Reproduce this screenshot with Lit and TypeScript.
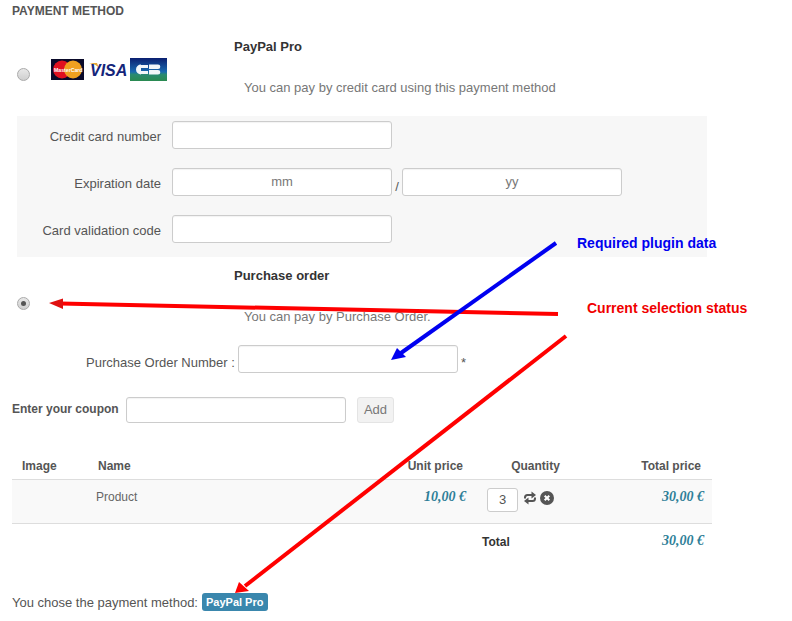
import { LitElement, html, css } from "lit";
import { customElement } from "lit/decorators.js";

@customElement("app-root")
export class AppRoot extends LitElement {
  static styles = css`
    :host { display: block; position: relative; width: 792px; height: 621px; overflow: hidden; background: #fff;
      font-family: "Liberation Sans", Arial, sans-serif; font-size: 13px; color: #555; }
    .page { display: flex; flex-direction: column; padding-left: 12px; }
    h1 { margin: 0; height: 22px; font-size: 12px; line-height: 22px; font-weight: bold; color: #555; }
    .method { display: grid; grid-template-columns: 5px 13px 21px 183px 1fr; height: 94px; }
    .method.po { height: 88px; }
    .radio { grid-column: 2; width: 13px; height: 13px; box-sizing: border-box; border-radius: 50%; border: 1px solid #aaa;
      background: linear-gradient(#e8e8e8, #cfcfcf); align-self: start; margin-top: 46px; display: flex; align-items: center; justify-content: center; }
    .radio.on { margin-top: 40px; }
    .radio i { width: 5px; height: 5px; border-radius: 50%; background: #555; }
    .cards { grid-column: 4; display: flex; align-items: flex-start; gap: 5px; padding-top: 36px; }
    .cards svg { display: block; overflow: visible; }
    .mc { margin-top: 1px; }
    .cb { margin-left: -4px; }
    .txt { grid-column: 5; display: flex; flex-direction: column; }
    .title { font-weight: bold; color: #333; line-height: 16px; margin-top: 17px; }
    .title.po { margin-top: 11px; }
    .desc { color: #777; line-height: 16px; margin-left: 10px; margin-top: 25px; white-space: nowrap; }
    .panel { margin-left: 5px; width: 690px; height: 141px; background: #f7f7f7; padding-top: 5px; box-sizing: border-box; display: flex; flex-direction: column; gap: 19px; }
    .row { display: flex; align-items: flex-start; height: 28px; }
    .row label { width: 144px; text-align: right; line-height: 16px; padding-top: 8px; color: #555; flex: none; margin-right: 11px; }
    .in { box-sizing: border-box; width: 220px; height: 28px; border: 1px solid #ccc; border-radius: 3px; background: #fff; color: #777;
      text-align: center; line-height: 26px; box-shadow: inset 0 1px 1px rgba(0,0,0,.05); flex: none; font-size: 13px; }
    .slash { width: 10px; text-align: center; padding-top: 11px; line-height: 16px; font-size: 13px; }
    .ponum { display: flex; align-items: flex-start; height: 28px; padding-left: 74px; }
    .ponum span { line-height: 16px; padding-top: 10px; width: 152px; white-space: nowrap; color: #555; }
    .star { margin-left: 3px; line-height: 16px; padding-top: 10px; font-size: 13px; color: #555; }
    .coupon { display: flex; align-items: flex-start; margin-top: 24px; height: 54px; }
    .coupon b { font-size: 12px; line-height: 16px; width: 114px; padding-top: 4px; flex: none; }
    .coupon .in { height: 26px; }
    .add { box-sizing: border-box; margin-left: 11px; width: 37px; height: 26px; border: 1px solid #e4e4e4; border-radius: 3px;
      background: #f2f2f2; color: #777; text-align: center; line-height: 24px; }
    table { border-collapse: collapse; width: 700px; table-layout: fixed; font-size: 12px; }
    .c1 { width: 76px; } .c2 { width: 270px; } .c3 { width: 116px; } .c4 { width: 114px; } .c5 { width: 124px; }
    th { height: 28px; padding: 2px 10px 0; font-weight: bold; color: #555; border-bottom: 1px solid #ddd; text-align: left; line-height: 24px; box-sizing: border-box; }
    th.unit { text-align: right; padding-right: 11px; }
    th.q { text-align: center; padding-left: 9px; padding-right: 0; }
    th.tp { text-align: right; padding-right: 11px; }
    .body td { height: 44px; background: #f9f9f9; border-bottom: 1px solid #ddd; vertical-align: top; padding: 9px 8px 0; box-sizing: border-box; }
    .foot td { height: 34px; vertical-align: top; padding: 9px 8px 0; box-sizing: border-box; }
    .body td.product { color: #666; line-height: 16px; }
    .body td.price, .foot td.price { font-family: "Liberation Serif", serif; font-style: italic; font-weight: bold; font-size: 14px; color: #2f7f98; line-height: 16px; text-align: right; padding-right: 8px; }
    .body td.qcell { padding: 8px 0 0 13px; }
    .qty { display: flex; align-items: flex-start; gap: 5px; }
    .qbox { box-sizing: border-box; width: 31px; height: 24px; border: 1px solid #ccc; border-radius: 3px; background: #fff; color: #555; text-align: center; line-height: 22px; font-size: 13px; }
    .qty svg { display: block; }
    .qty .ic { display: flex; gap: 3px; padding-top: 3px; }
    .foot td.total { font-weight: bold; color: #333; line-height: 16px; padding-top: 10px; }
    .chose { margin-top: 36px; display: flex; align-items: center; height: 20px; line-height: 20px; white-space: pre; }
    .badge { display: inline-block; margin: -2px 0 0 4px; background: #3a87ad; color: #fff; font-weight: bold; font-size: 11px; border-radius: 3px; padding: 0 5px 0 4px; height: 18px; line-height: 18px; }
    .overlay { position: absolute; left: 0; top: 0; pointer-events: none; }
    .note { position: absolute; font-size: 14px; font-weight: bold; line-height: 16px; white-space: nowrap; }
    .blue { left: 577px; top: 235px; color: #0000f0; }
    .red { left: 587px; top: 300px; color: #f00000; }
  `;

  private cards() {
    return html`
      <svg class="mc" width="33" height="21" viewBox="0 0 33 21">
        <rect width="33" height="21" fill="#0a0a2a"/>
        <circle cx="11" cy="10.5" r="9" fill="#e01020"/>
        <circle cx="22" cy="10.5" r="9" fill="#f0a020"/>
        <text x="3" y="12.500" font-size="5.200" font-weight="bold" font-family="Liberation Sans" fill="#fff">MasterCard</text>
      </svg>
      <svg width="40" height="22" viewBox="0 0 40 22">
        <path d="M0 5h8l2 5q-3-4-10-5z" fill="#e8a83a"/>
        <text x="1" y="18" font-size="16" font-weight="bold" font-style="italic" font-family="Liberation Sans" fill="#14257a">VISA</text>
      </svg>
      <svg class="cb" width="37" height="23" viewBox="0 0 37 23">
        <defs><linearGradient id="cb" x1="0" y1="0" x2="0" y2="1">
          <stop offset="0" stop-color="#0a1f70"/><stop offset=".6" stop-color="#1a6ab0"/><stop offset=".72" stop-color="#2a8a70"/><stop offset="1" stop-color="#2a8a50"/>
        </linearGradient></defs>
        <rect width="37" height="23" fill="url(#cb)"/>
        <path d="M10 7h8v3h-8a1.500 1.500 0 0 1 0-3zM10 13h8v3h-8a1.500 1.500 0 0 1 0-3zM6 11.500a5 5 0 0 1 5-5v10a5 5 0 0 1-5-5zM19 6.500h9a2.300 2.300 0 0 1 0 4.600h-9zM19 12h9a2.300 2.300 0 0 1 0 4.600h-9z" fill="#f2f6fa"/>
      </svg>`;
  }

  render() {
    return html`
      <div class="page">
        <h1>PAYMENT METHOD</h1>
        <div class="method">
          <div class="radio"></div>
          <div class="cards">${this.cards()}</div>
          <div class="txt">
            <div class="title">PayPal Pro</div>
            <div class="desc">You can pay by credit card using this payment method</div>
          </div>
        </div>
        <div class="panel">
          <div class="row"><label>Credit card number</label><div class="in"></div></div>
          <div class="row"><label>Expiration date</label><div class="in">mm</div><div class="slash">/</div><div class="in">yy</div></div>
          <div class="row"><label>Card validation code</label><div class="in"></div></div>
        </div>
        <div class="method po">
          <div class="radio on"><i></i></div>
          <div class="txt">
            <div class="title po">Purchase order</div>
            <div class="desc">You can pay by Purchase Order.</div>
          </div>
        </div>
        <div class="ponum"><span>Purchase Order Number :</span><div class="in"></div><div class="star">*</div></div>
        <div class="coupon"><b>Enter your coupon</b><div class="in"></div><div class="add">Add</div></div>
        <table>
          <colgroup><col class="c1"/><col class="c2"/><col class="c3"/><col class="c4"/><col class="c5"/></colgroup>
          <thead><tr><th>Image</th><th>Name</th><th class="unit">Unit price</th><th class="q">Quantity</th><th class="tp">Total price</th></tr></thead>
          <tbody>
            <tr class="body">
              <td></td><td class="product">Product</td>
              <td class="price">10,00 €</td>
              <td class="qcell"><div class="qty"><div class="qbox">3</div><div class="ic">
                <svg width="14" height="14" viewBox="0 0 14 14" fill="#555"><path d="M2 7.500V6.500Q2 4 4.500 4H9" fill="none" stroke="#555" stroke-width="2"/><path d="M8.500 .5L13 4L8.500 7.500z"/><g transform="rotate(180 7 7)"><path d="M2 7.500V6.500Q2 4 4.500 4H9" fill="none" stroke="#555" stroke-width="2"/><path d="M8.500 .5L13 4L8.500 7.500z"/></g></svg>
                <svg width="14" height="14" viewBox="0 0 14 14"><circle cx="7" cy="7" r="7" fill="#555"/><path d="M4.700 4.700l4.600 4.600M9.300 4.700l-4.600 4.600" stroke="#fff" stroke-width="2"/></svg>
              </div></div></td>
              <td class="price">30,00 €</td>
            </tr>
            <tr class="foot">
              <td></td><td></td><td></td><td class="total">Total</td><td class="price">30,00 €</td>
            </tr>
          </tbody>
        </table>
        <div class="chose">You chose the payment method:<span class="badge">PayPal Pro</span></div>
      </div>
      <svg class="overlay" width="792" height="621">
        <path d="M558 314 L60 303.500" stroke="#f00" stroke-width="4"/>
        <path d="M49 303 L63 298.500 L63 309z" fill="#e01010"/>
        <path d="M556 243 L401 353" stroke="#0000f0" stroke-width="4"/>
        <path d="M391 360 L397 348 L406 357z" fill="#0000f0"/>
        <path d="M566 336 L245 586" stroke="#f00" stroke-width="4"/>
        <path d="M235 593 L239 582 L249 591z" fill="#f00"/>
      </svg>
      <div class="note blue">Required plugin data</div>
      <div class="note red">Current selection status</div>
    `;
  }
}
